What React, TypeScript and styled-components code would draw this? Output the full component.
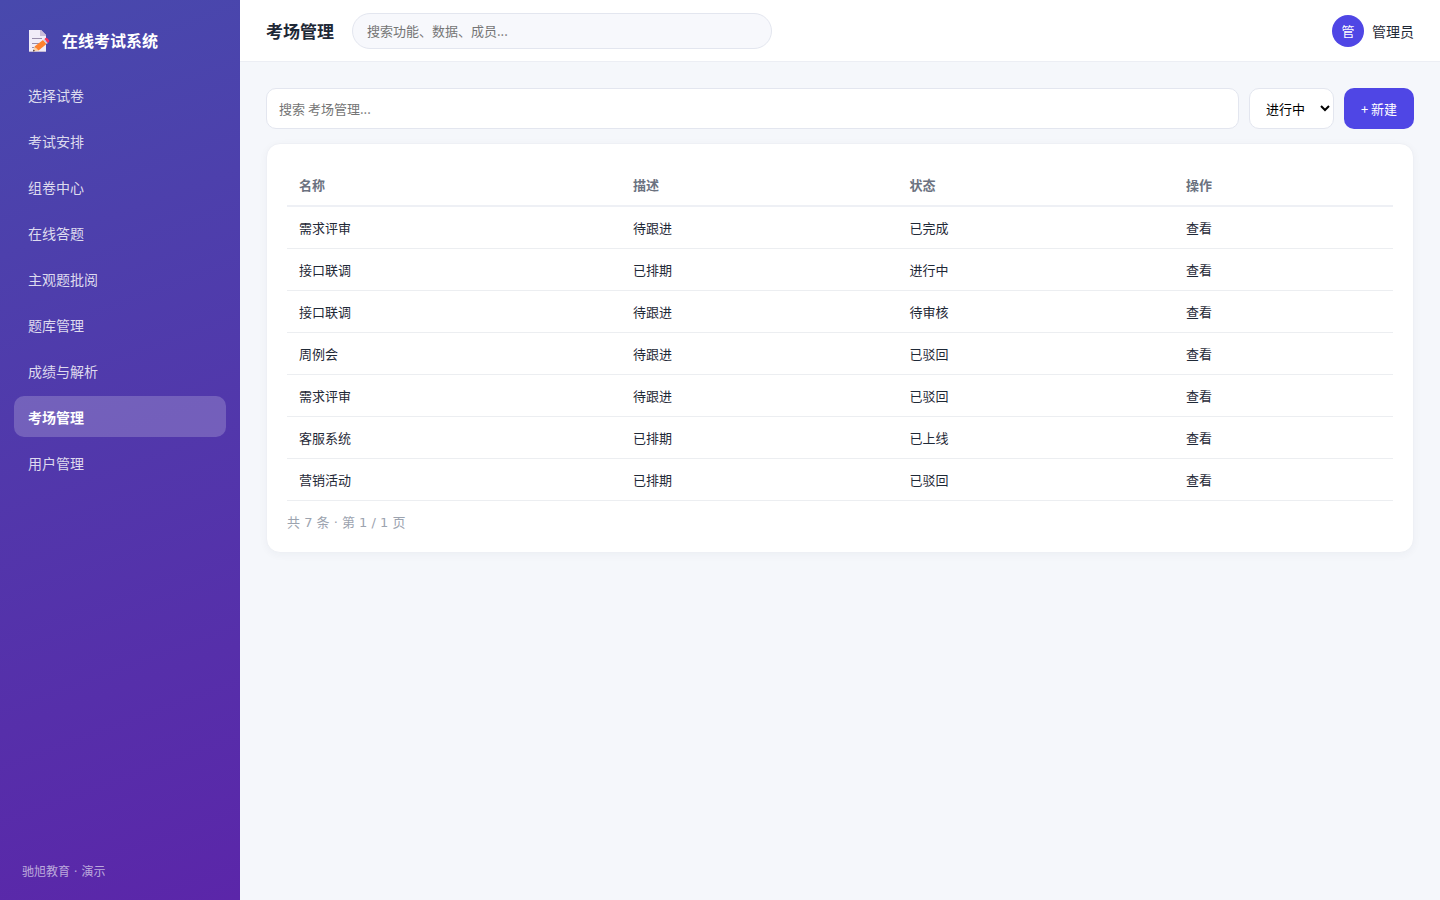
import React from "react";
import styled, { createGlobalStyle } from "styled-components";

const GlobalStyle = createGlobalStyle`
  * { box-sizing: border-box; }
  body {
    margin: 0;
    background: #f5f7fb;
    color: #1f2937;
    font-family: "Noto Sans CJK SC", "Noto Sans", sans-serif;
    font-size: 14px;
    line-height: 20px;
  }
  input, select, button { font-family: inherit; font-size: 13px; }
`;

const Shell = styled.div`
  display: flex;
  min-height: 100vh;
`;

const Sidebar = styled.aside`
  display: flex;
  flex-direction: column;
  flex: 0 0 240px;
  padding: 22px 14px 18px;
  color: #fff;
  background: linear-gradient(160deg, #4849ad, #5b26a9);
`;

const Brand = styled.div`
  display: flex;
  align-items: center;
  gap: 12px;
  height: 36px;
  margin-bottom: 16px;
  padding: 0 14px;
  font-size: 16px;
  font-weight: 700;
`;

const Nav = styled.nav`
  display: flex;
  flex-direction: column;
  gap: 5px;
`;

const NavLink = styled.a<{ $active?: boolean }>`
  padding: 11px 14px 10px;
  border-radius: 10px;
  color: ${(p) => (p.$active ? "#fff" : "rgba(255, 255, 255, 0.82)")};
  background: ${(p) => (p.$active ? "rgba(255, 255, 255, 0.2)" : "transparent")};
  font-weight: ${(p) => (p.$active ? 700 : 400)};
  text-decoration: none;
`;

const SidebarFooter = styled.div`
  margin-top: auto;
  padding: 0 8px;
  color: rgba(255, 255, 255, 0.6);
  font-family: "DejaVu Sans", "Noto Sans CJK SC", sans-serif;
  font-size: 12px;
`;

const Main = styled.div`
  flex: 1;
  min-width: 0;
`;

const Header = styled.header`
  display: flex;
  align-items: center;
  gap: 18px;
  height: 62px;
  padding: 0 26px;
  background: #fff;
  border-bottom: 1px solid #eceef4;
`;

const Title = styled.h1`
  margin: 0;
  font-size: 17px;
  font-weight: 700;
`;

const GlobalSearch = styled.input`
  width: 420px;
  height: 36px;
  padding: 0 14px;
  border: 1px solid #e3e6ef;
  border-radius: 18px;
  background: #f7f8fc;
  &::placeholder { color: #757575; }
`;

const User = styled.div`
  display: flex;
  align-items: center;
  gap: 8px;
  margin-left: auto;
`;

const Avatar = styled.span`
  display: grid;
  place-items: center;
  width: 32px;
  height: 32px;
  border-radius: 50%;
  color: #fff;
  background: #4f46e5;
  font-size: 13px;
`;

const Content = styled.main`
  padding: 26px;
`;

const Toolbar = styled.div`
  display: flex;
  gap: 10px;
  height: 41px;
  margin-bottom: 14px;
`;

const FilterInput = styled.input`
  flex: 1;
  min-width: 0;
  padding: 0 12px;
  border: 1px solid #e3e6ef;
  border-radius: 10px;
  background: #fff;
  &::placeholder { color: #757575; }
`;

const StatusSelect = styled.select`
  width: 85px;
  padding: 0 0 0 12px;
  border: 1px solid #e3e6ef;
  border-radius: 10px;
  color: #000;
  background: #fff;
`;

const CreateButton = styled.button`
  width: 70px;
  padding: 0;
  border: 0;
  border-radius: 10px;
  color: #fff;
  background: #4f46e5;
`;

const Card = styled.section`
  padding: 20px;
  border: 1px solid #eef0f5;
  border-radius: 14px;
  background: #fff;
  box-shadow: 0 2px 8px rgba(31, 41, 80, 0.04);
`;

const Table = styled.table`
  width: 100%;
  table-layout: fixed;
  border-collapse: separate;
  border-spacing: 0;
  font-size: 13px;
  text-align: left;
`;

const HeadCell = styled.th<{ $width?: string }>`
  width: ${(p) => p.$width ?? "auto"};
  height: 43px;
  padding: 0 12px;
  border-bottom: 2px solid #eef0f5;
  color: #6b7280;
  font-weight: 700;
`;

const Cell = styled.td`
  height: 42px;
  padding: 0 12px;
  border-bottom: 1px solid #eceef1;
`;

const ViewLink = styled.a`
  color: inherit;
  text-decoration: none;
`;

const Pager = styled.p`
  margin: 12px 0 0;
  color: #9ca3af;
  font-family: "DejaVu Sans", "Noto Sans CJK SC", sans-serif;
  font-size: 13px;
  line-height: 19px;
`;

const MemoIcon = () => (
  <svg width="22" height="26" viewBox="0 0 22 26" aria-hidden="true">
    <g transform="translate(0 2)">
      <path d="M1 1h12l5 5v17H1z" fill="#f1ecf8" />
      <path d="M12 1v6h6v-1l-5-5z" fill="#c9bcd8" />
      <path d="M1 22h17v1H1z" fill="#c3b8d4" />
      <path d="M4 9.500h10M4 14.500h8M4 18.500h4" stroke="#998eab" />
      <path d="M5 22.500l1.500-5 4 4z" fill="#fdd0a0" />
      <path d="M5 22.500l.5-2 1.500 1.500z" fill="#35262f" />
      <path d="M6.500 17.500l8.500-6.500 3.500 4-8 6.500z" fill="#ff822d" />
      <path d="M15 11l1.500-1 3.500 4-1.500 1z" fill="#d6cbdc" />
      <path d="M16.500 10l1-1q1-.6 1.800.2l1.800 2q.6 1-.2 1.800l-1 1z" fill="#f8315d" />
    </g>
  </svg>
);

const navItems = ["选择试卷", "考试安排", "组卷中心", "在线答题", "主观题批阅", "题库管理", "成绩与解析", "考场管理", "用户管理"];

const rows = [
  ["需求评审", "待跟进", "已完成"],
  ["接口联调", "已排期", "进行中"],
  ["接口联调", "待跟进", "待审核"],
  ["周例会", "待跟进", "已驳回"],
  ["需求评审", "待跟进", "已驳回"],
  ["客服系统", "已排期", "已上线"],
  ["营销活动", "已排期", "已驳回"],
];

export default function App() {
  return (
    <Shell>
      <GlobalStyle />
      <Sidebar>
        <Brand>
          <MemoIcon />
          <span>在线考试系统</span>
        </Brand>
        <Nav>
          {navItems.map((item) => (
            <NavLink
              key={item}
              href="#"
              $active={item === "考场管理"}
              aria-current={item === "考场管理" ? "page" : undefined}
            >
              {item}
            </NavLink>
          ))}
        </Nav>
        <SidebarFooter>驰旭教育 · 演示</SidebarFooter>
      </Sidebar>
      <Main>
        <Header>
          <Title>考场管理</Title>
          <GlobalSearch type="search" aria-label="全局搜索" placeholder="搜索功能、数据、成员..." />
          <User>
            <Avatar>管</Avatar>
            <span>管理员</span>
          </User>
        </Header>
        <Content>
          <Toolbar>
            <FilterInput type="text" aria-label="搜索考场" placeholder="搜索 考场管理..." />
            <StatusSelect aria-label="状态" defaultValue="进行中">
              <option>进行中</option>
              <option>已完成</option>
            </StatusSelect>
            <CreateButton type="button">+ 新建</CreateButton>
          </Toolbar>
          <Card>
            <Table>
              <thead>
                <tr>
                  <HeadCell $width="30.2%">名称</HeadCell>
                  <HeadCell $width="25%">描述</HeadCell>
                  <HeadCell $width="25%">状态</HeadCell>
                  <HeadCell>操作</HeadCell>
                </tr>
              </thead>
              <tbody>
                {rows.map(([name, description, status], index) => (
                  <tr key={index}>
                    <Cell>{name}</Cell>
                    <Cell>{description}</Cell>
                    <Cell>{status}</Cell>
                    <Cell>
                      <ViewLink href="#">查看</ViewLink>
                    </Cell>
                  </tr>
                ))}
              </tbody>
            </Table>
            <Pager>共 7 条 · 第 1 / 1 页</Pager>
          </Card>
        </Content>
      </Main>
    </Shell>
  );
}
